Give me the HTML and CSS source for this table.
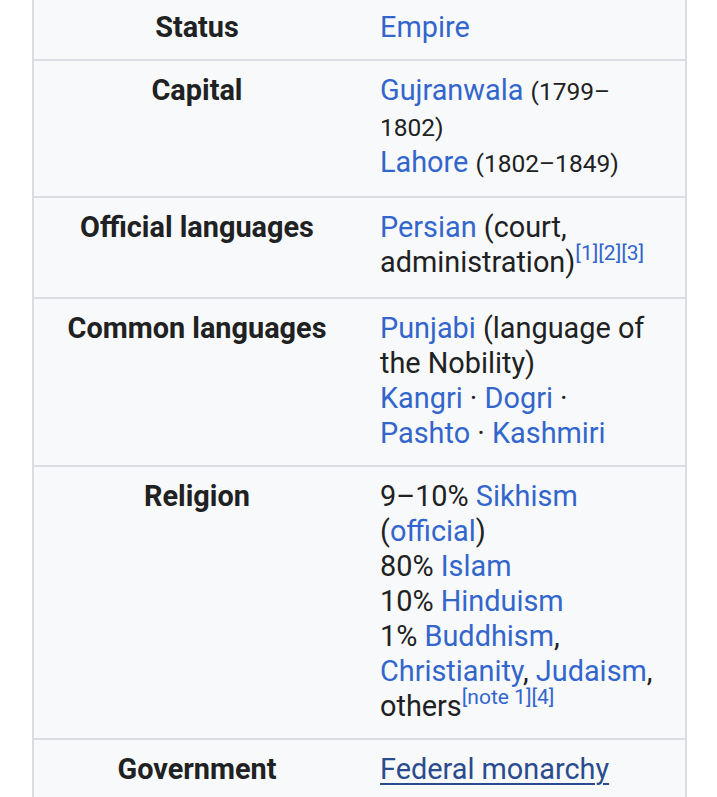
FILE: index.html
```html
<!DOCTYPE html>
<html lang="en">
<head>
<meta charset="utf-8">
<title>Sikh Empire infobox</title>
<link rel="stylesheet" href="styles.css">
</head>
<body>
<div class="infobox">
  <div class="row first">
    <div class="label">Status</div>
    <div class="value"><a href="#">Empire</a></div>
  </div>
  <div class="row row-small">
    <div class="label">Capital</div>
    <div class="value"><a href="#">Gujranwala</a> <span class="small">(1799–1802)</span><br><a href="#">Lahore</a> <span class="small">(1802–1849)</span></div>
  </div>
  <div class="row row-refs">
    <div class="label">Official languages</div>
    <div class="value"><a href="#">Persian</a> (court, administration)<sup class="ref"><a href="#">[1]</a><a href="#">[2]</a><a href="#">[3]</a></sup></div>
  </div>
  <div class="row">
    <div class="label">Common languages</div>
    <div class="value"><a href="#">Punjabi</a> (language of the Nobility)<br><a href="#">Kangri</a> · <a href="#">Dogri</a> · <a href="#">Pashto</a> · <a href="#">Kashmiri</a></div>
  </div>
  <div class="row">
    <div class="label">Religion</div>
    <div class="value">9–10% <a href="#">Sikhism</a> (<a href="#">official</a>)<br>80% <a href="#">Islam</a><br>10% <a href="#">Hinduism</a><br>1% <a href="#">Buddhism</a>, <a href="#">Christianity</a>, <a href="#">Judaism</a>, others<sup class="ref"><a href="#">[note 1]</a><a href="#">[4]</a></sup></div>
  </div>
  <div class="row">
    <div class="label">Government</div>
    <div class="value"><a href="#" class="active">Federal monarchy</a></div>
  </div>
</div>
</body>
</html>
```

FILE: styles.css
```css
html, body {
  margin: 0;
  padding: 0;
  background: #ffffff;
}

body {
  font-family: Roboto, "Liberation Sans", sans-serif;
  font-size: 28.85px;
  line-height: 35px;
  color: #202122;
}

.infobox {
  margin-left: 32px;
  width: 651px;
  background: #f8f9fa;
  border-left: 2px solid #dadde2;
  border-right: 2px solid #dadde2;
}

.row {
  display: grid;
  grid-template-columns: 326px 1fr;
  border-top: 2px solid #dadde2;
}

.row.first {
  border-top: none;
}

.label {
  font-weight: 700;
  text-align: center;
  padding: 12px 20px 14px;
}

.value {
  padding: 12px 21px 14px 20px;
}

.row.first .label,
.row.first .value {
  padding-top: 10px;
  padding-bottom: 14px;
}

.row.row-small .value {
  padding-bottom: 15px;
}

.row.row-refs .value {
  padding-bottom: 17px;
}

a {
  color: #3366cc;
  text-decoration: none;
}

a.active {
  color: #2a4b8d;
  text-decoration: underline;
  text-decoration-thickness: 2px;
  text-underline-offset: 4px;
}

.small {
  font-size: 85%;
}

.ref {
  font-size: 21px;
  line-height: 0;
  vertical-align: 12px;
}
```
